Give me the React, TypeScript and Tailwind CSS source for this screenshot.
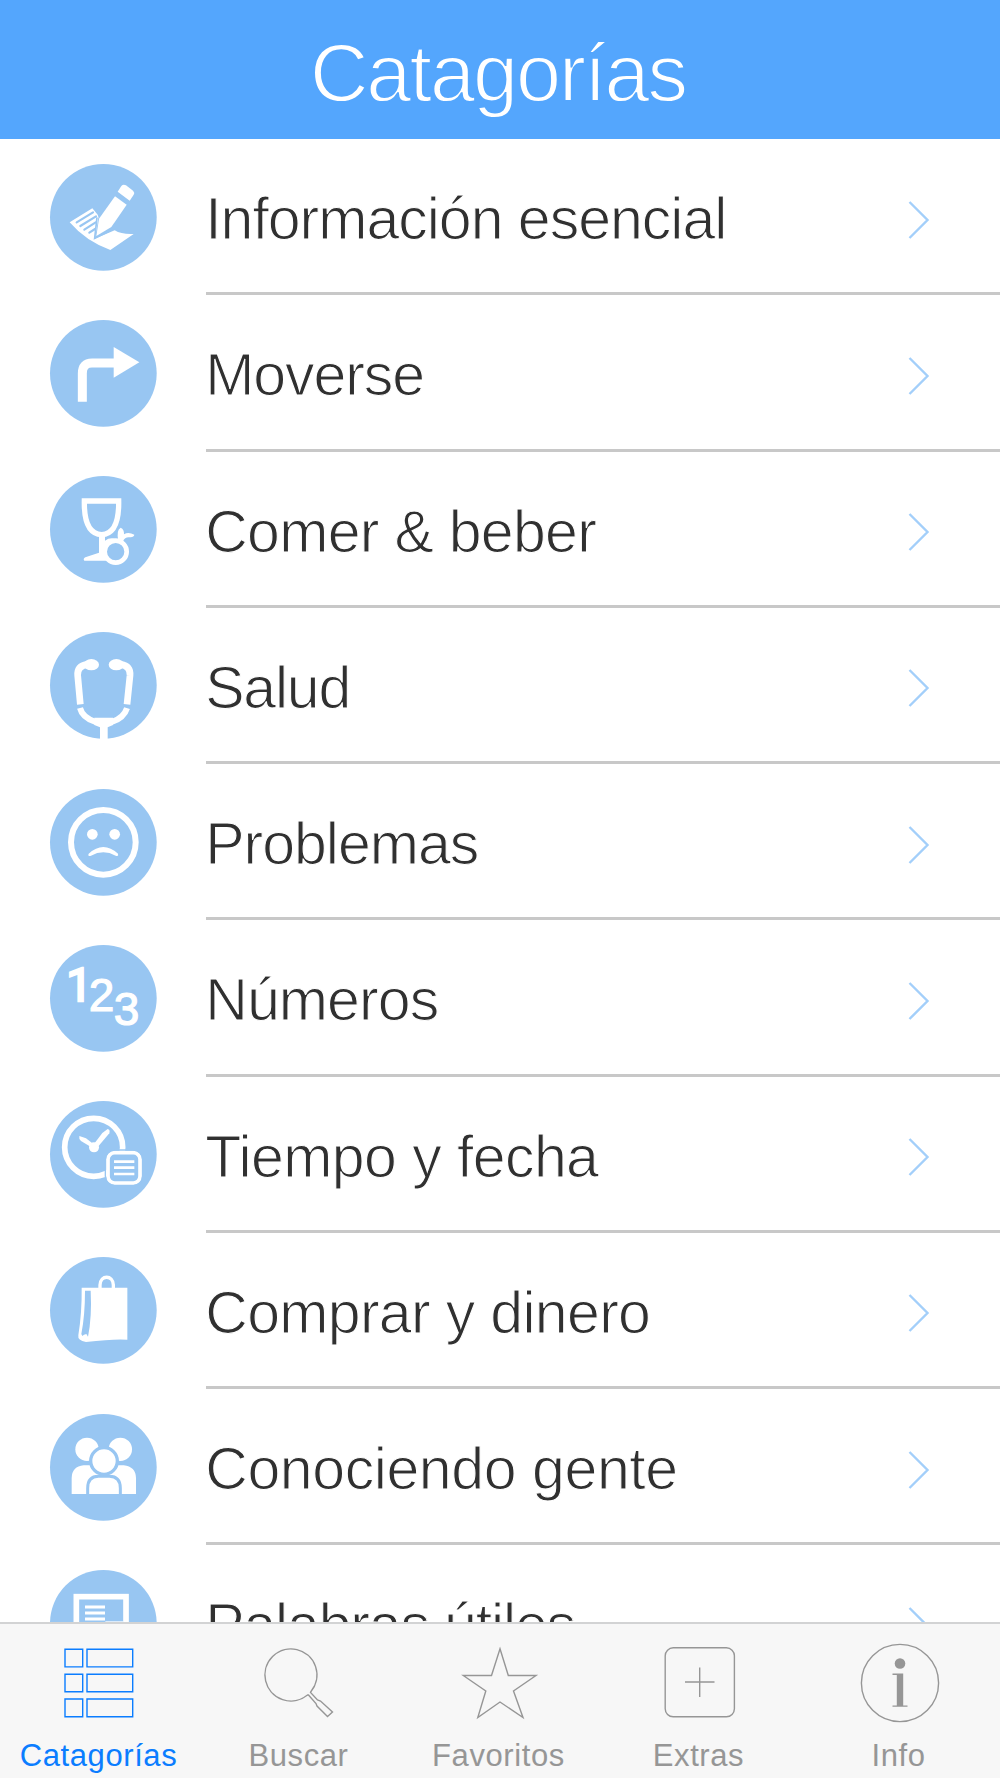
import type { ReactNode } from 'react';
import clsx from 'clsx';

const BLUE = '#98c6f2';

// ===================================
// Category icons (320 x 320 grid)
// ===================================

const WriteIcon = () => (
  <g fill="#fff">
    <path d="M59 175 127 133 143 152 147 164 139 215 131 226 194 199Q215 212 251 210L181 258Q108 232 59 175Z" />
    <g stroke={BLUE} strokeWidth="6.5" fill="none" strokeLinecap="round">
      <path d="M80 175 129 145M91 186 138 157M103 197 137 175M118 206 135 195" />
    </g>
    <path
      d="M195 97 230 122 184 189 139 216 147 164Z"
      stroke={BLUE}
      strokeWidth="5"
      paintOrder="stroke"
    />
    <path d="M141 160 134 223 184 198" stroke={BLUE} strokeWidth="5" fill="none" />
    <path d="M203 83 214 66Q220 59 228 64L249 80Q255 86 251 92L239 110Z" />
  </g>
);

const TurnIcon = () => (
  <g>
    <path d="M97 245V160Q97 129 126 129H195" fill="none" stroke="#fff" strokeWidth="27" />
    <path d="M191 81 268 127 191 173Z" fill="#fff" />
  </g>
);

const DrinkIcon = () => (
  <g fill="none" stroke="#fff">
    <path d="M103 75H206C207 130 195 174 155 176C114 174 102 130 103 75Z" strokeWidth="16" />
    <path
      d="M147 178H165V194Q178 184 194 188L200 250 175 254H103Q98 249 106 244L147 230Z"
      fill="#fff"
      stroke="none"
    />
    <circle cx="197" cy="227" r="33" fill={BLUE} strokeWidth="14" />
    <path
      d="M205 196Q198 162 212 155Q223 160 222 175Q235 167 253 176Q252 184 236 184Q224 184 219 196Z"
      fill="#fff"
      stroke="none"
    />
  </g>
);

const HealthIcon = () => (
  <g fill="none" stroke="#fff" strokeWidth="20">
    <path d="M91 217 83 130Q81 102 111 97M231 217 240 130Q242 102 213 97" />
    <g fill="#fff" stroke="none">
      <ellipse cx="124" cy="98" rx="23" ry="17" />
      <ellipse cx="199" cy="98" rx="23" ry="17" />
    </g>
    <path d="M90 228Q97 257 137 270H185Q222 257 231 228" strokeWidth="18" />
    <path d="M133 257H189V279L173 286V325H150V286L133 279Z" fill="#fff" stroke="none" />
  </g>
);

const SadIcon = () => (
  <g fill="none" stroke="#fff">
    <circle cx="160" cy="160" r="97" strokeWidth="18" />
    <g fill="#fff" stroke="none">
      <circle cx="127" cy="136" r="16" />
      <circle cx="194" cy="136" r="16" />
      <path d="M116 194Q160 154 204 194Q207 203 197 200Q160 180 123 200Q112 203 116 194Z" />
    </g>
  </g>
);

const NumbersIcon = () => (
  <g
    fill="#fff"
    stroke="#fff"
    strokeWidth="3.5"
    fontSize="138"
    className="font-['Liberation_Sans',Arial,sans-serif]"
  >
    <text x="49" y="167" strokeWidth="7" className="font-[Roboto,sans-serif]">
      1
    </text>
    <text x="116" y="198">2</text>
    <text x="191" y="241">3</text>
  </g>
);

const TimeIcon = () => (
  <g fill="none" stroke="#fff">
    <circle cx="131" cy="139" r="87" strokeWidth="17" />
    <circle cx="132" cy="139" r="15" fill="#fff" stroke="none" />
    <path d="M88 105 108 112 134 132 128 141 93 120Q86 113 88 105Z" fill="#fff" stroke="none" />
    <path d="M128 134 157 96 173 84Q181 85 178 97L140 142Z" fill="#fff" stroke="none" />
    <rect x="174" y="155" width="96" height="91" rx="20" fill={BLUE} strokeWidth="11" />
    <rect x="166" y="147" width="112" height="107" rx="28" stroke={BLUE} strokeWidth="4" />
    <path d="M192 182H253M192 200H253M192 219H253" strokeWidth="8" />
  </g>
);

const ShoppingIcon = () => (
  <g fill="#fff">
    <path d="M150 98V84C151 53 189 53 190 84V98" fill="none" stroke="#fff" strokeWidth="10" />
    <path d="M95 92H232V248Q190 245 108 255Q82 250 85 235Q96 165 95 92Z" />
    <path
      d="M105 101H122Q126 180 114 239L109 231Q101 233 97 237L94 231Q105 175 105 101Z"
      fill={BLUE}
    />
  </g>
);

const PeopleIcon = () => (
  <g fill="#fff">
    <circle cx="111" cy="106" r="35" />
    <circle cx="211" cy="106" r="35" />
    <path d="M65 240V192Q66 157 101 154H124L161 176 199 154H221Q257 158 258 192V240Z" />
    <path
      d="M113 245V223Q113 187 145 187H178Q211 187 211 223V245Z"
      stroke={BLUE}
      strokeWidth="9"
    />
    <circle cx="162" cy="141" r="40" stroke={BLUE} strokeWidth="10" />
    <path d="M60 240H264V256H60Z" fill={BLUE} />
  </g>
);

const WordsIcon = () => (
  <g fill="none" stroke="#fff">
    <rect x="79" y="80" width="149" height="150" strokeWidth="17" />
    <path d="M105 111H165M105 129H165M105 147H165" strokeWidth="9" />
    <path d="M166 157H220" strokeWidth="6" />
  </g>
);

interface Category {
  label: string;
  icon: ReactNode;
  tracking: string;
}

const categories: Category[] = [
  { label: 'Información esencial', icon: <WriteIcon />, tracking: 'tracking-[-1px]' },
  { label: 'Moverse', icon: <TurnIcon />, tracking: 'tracking-[-1.05px]' },
  { label: 'Comer & beber', icon: <DrinkIcon />, tracking: 'tracking-[-0.7px]' },
  { label: 'Salud', icon: <HealthIcon />, tracking: 'tracking-[-1.2px]' },
  { label: 'Problemas', icon: <SadIcon />, tracking: 'tracking-[-1px]' },
  { label: 'Números', icon: <NumbersIcon />, tracking: 'tracking-[-0.9px]' },
  { label: 'Tiempo y fecha', icon: <TimeIcon />, tracking: 'tracking-[-0.57px]' },
  { label: 'Comprar y dinero', icon: <ShoppingIcon />, tracking: 'tracking-[-0.67px]' },
  { label: 'Conociendo gente', icon: <PeopleIcon />, tracking: 'tracking-[-0.4px]' },
  { label: 'Palabras útiles', icon: <WordsIcon />, tracking: 'tracking-[-1.15px]' },
];

// ===================================
// Tab bar icons (80 x 80 grid)
// ===================================

const tabs = [
  {
    label: 'Catagorías',
    icon: (
      <path d="M5 9.2h17.7v17.7H5zM27 9.2h45.7v17.7H27zM5 34.2h17.7v17.5H5zM27 34.2h45.7v17.5H27zM5 59h17.7v17.7H5zM27 59h45.7v17.7H27z" />
    ),
  },
  {
    label: 'Buscar',
    icon: (
      <path d="M47.5 55A26 26 0 1 1 51 51.5L50.5 52.5 57.5 60 60.5 61 72.5 72 67.5 76.5 57 66 56 63.5 48.5 55Z" />
    ),
  },
  {
    label: 'Favoritos',
    icon: (
      <path d="M40 8.8 48.3 35.5H76L53.5 51 63 77.5 40 62 17.8 77.5 25.8 51 3.3 35.5H31.5Z" />
    ),
  },
  {
    label: 'Extras',
    icon: (
      <>
        <rect x="5.2" y="7.8" width="69.2" height="69" rx="8" />
        <path d="M39.7 27.5v29.5M25 42h29.5" />
      </>
    ),
  },
  {
    label: 'Info',
    icon: (
      <>
        <circle cx="40" cy="43" r="38.6" />
        <g fill="currentColor" stroke="none">
          <circle cx="40" cy="23.5" r="5.3" />
          <path d="M32.5 33.5H43.2V65.4H47.5V66.8H32.5V65.4H36.8V35H32.5Z" />
        </g>
      </>
    ),
  },
];

function CategoryRow({ label, icon, tracking }: Category) {
  return (
    <li className="flex h-[156.25px] shrink-0 pl-[50px]">
      <svg viewBox="0 0 320 320" className="mt-[24.7px] size-[106.7px] shrink-0 overflow-visible">
        <circle cx="160" cy="160" r="160" fill={BLUE} />
        {icon}
      </svg>
      <div className="ml-[49.5px] flex flex-1 items-center justify-between border-b-[3px] border-[#c8c8c8] pr-[70px]">
        <span
          className={clsx(
            '-ml-px pt-[8px] text-[59px] leading-none whitespace-nowrap text-[#303030] [-webkit-text-stroke:1.1px_#fff]',
            tracking
          )}
        >
          {label}
        </span>
        <svg viewBox="0 0 22 40" className="mt-[8px] h-10 w-[22px]" fill="none" stroke="#a3cffa" strokeWidth="2.4">
          <path d="M1.5 2 19.5 20 1.5 38" />
        </svg>
      </div>
    </li>
  );
}

export default function App() {
  return (
    <div className="flex h-[1778px] w-[1000px] flex-col overflow-hidden bg-white font-['Liberation_Sans',Arial,sans-serif]">
      {/* Header */}
      <header className="flex h-[139px] shrink-0 items-center justify-center bg-[#54a6fd]">
        <h1 className="pt-[7px] pr-[4px] text-[81px] leading-none tracking-[-2px] text-white [-webkit-text-stroke:1.8px_#54a6fd]">
          Catagorías
        </h1>
      </header>

      {/* Category list */}
      <ul className="flex min-h-0 flex-1 flex-col overflow-hidden">
        {categories.map((category) => (
          <CategoryRow key={category.label} {...category} />
        ))}
      </ul>

      {/* Tab bar */}
      <nav className="grid h-[156px] shrink-0 grid-cols-5 border-t-2 border-[#d2d3d4] bg-[#f7f7f7]">
        {tabs.map((tab, index) => (
          <a
            key={tab.label}
            className={clsx('flex flex-col items-center', index === 0 ? 'text-[#0b7dff]' : 'text-[#969696]')}
          >
            <svg
              viewBox="0 0 80 80"
              className="mt-[16px] size-20 overflow-visible"
              fill="none"
              stroke="currentColor"
              strokeWidth="1.4"
            >
              {tab.icon}
            </svg>
            <span className="mt-[18px] mr-[3px] text-[31px] leading-[35px] tracking-[0.6px]">{tab.label}</span>
          </a>
        ))}
      </nav>
    </div>
  );
}
